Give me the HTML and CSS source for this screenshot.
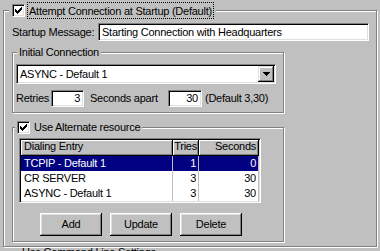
FILE: index.html
```html
<!DOCTYPE html>
<html lang="en">
<head>
    <meta charset="UTF-8">
    <title>Connection Options</title>
    <link rel="stylesheet" href="styles.css">
</head>
<body>
    <div class="group outer">
        <div class="grouptitle main-title">
            <span class="checkbox">
                <svg width="7" height="7" viewBox="0 0 7 7"><path d="M6 0h1v1h-1z M5 1h2v1h-2z M0 2h1v1h-1z M4 2h3v1h-3z M0 3h2v1h-2z M3 3h3v1h-3z M0 4h5v1h-5z M1 5h3v1h-3z M2 6h1v1h-1z" fill="#000"/></svg>
            </span>
            <span class="focus">Attempt Connection at Startup (Default)</span>
        </div>

        <div class="msgrow">
            <span class="msglabel">Startup Message:</span>
            <div class="field msgfield">Starting Connection with Headquarters</div>
        </div>

        <div class="group initial">
            <div class="grouptitle initial-title">Initial Connection</div>
            <div class="combo">
                <span class="combotext">ASYNC - Default 1</span>
                <span class="arrowbtn">
                    <svg width="7" height="4" viewBox="0 0 7 4"><path d="M0 0h7v1h-1v1h-1v1h-1v1h-1v-1h-1v-1h-1v-1h-1z" fill="#000"/></svg>
                </span>
            </div>
            <div class="retryrow">
                <span class="retrylabel">Retries</span>
                <div class="field small">3</div>
                <span class="secslabel">Seconds apart</span>
                <div class="field small wide">30</div>
                <span class="deflabel">(Default 3,30)</span>
            </div>
        </div>

        <div class="group alternate">
            <div class="grouptitle alt-title">
                <span class="checkbox">
                    <svg width="7" height="7" viewBox="0 0 7 7"><path d="M6 0h1v1h-1z M5 1h2v1h-2z M0 2h1v1h-1z M4 2h3v1h-3z M0 3h2v1h-2z M3 3h3v1h-3z M0 4h5v1h-5z M1 5h3v1h-3z M2 6h1v1h-1z" fill="#000"/></svg>
                </span>
                <span class="alttext">Use Alternate resource</span>
            </div>

            <div class="list">
                <div class="lrow head">
                    <span class="cell c1">Dialing Entry</span>
                    <span class="cell c2">Tries</span>
                    <span class="cell c3">Seconds</span>
                </div>
                <div class="lrow selected">
                    <span class="cell c1">TCPIP - Default 1</span>
                    <span class="cell c2">1</span>
                    <span class="cell c3">0</span>
                </div>
                <div class="lrow">
                    <span class="cell c1">CR SERVER</span>
                    <span class="cell c2">3</span>
                    <span class="cell c3">30</span>
                </div>
                <div class="lrow">
                    <span class="cell c1">ASYNC - Default 1</span>
                    <span class="cell c2">3</span>
                    <span class="cell c3">30</span>
                </div>
            </div>

            <div class="buttons">
                <button class="btn">Add</button>
                <button class="btn">Update</button>
                <button class="btn">Delete</button>
            </div>
        </div>
    </div>
    <div class="below">Use Command Line Settings</div>
</body>
</html>
```

FILE: styles.css
```css
* {
    box-sizing: border-box;
}
body {
    margin: 0;
    background-color: #c0c0c0;
    font-family: "Liberation Sans", Arial, sans-serif;
    font-size: 11px;
    letter-spacing: -0.25px;
    line-height: 13px;
    color: #000;
    overflow: hidden;
}

/* etched group boxes */
.group {
    border: 1px solid #808080;
    box-shadow: inset 1px 1px 0 #fff, 1px 1px 0 #fff;
}
.outer {
    margin: 10px 0 0 3px;
    width: 374px;
    height: 237px;
}
.grouptitle {
    width: fit-content;
    background-color: #c0c0c0;
    display: flex;
    align-items: center;
}
.main-title {
    margin: -9px 0 0 5px;
    padding: 0 2px 0 3px;
}
.initial-title {
    margin: -7px 0 0 4px;
    padding: 0 2px;
}
.alt-title {
    margin: -7px 0 0 2px;
    padding: 0 2px;
}

.checkbox {
    width: 13px;
    height: 13px;
    background-color: white;
    border-top: 1px solid #808080;
    border-left: 1px solid #808080;
    border-right: 1px solid #fff;
    border-bottom: 1px solid #fff;
    box-shadow: inset 1px 1px 0 #000, inset -1px -1px 0 #dfdfdf;
    display: flex;
    align-items: center;
    justify-content: center;
}
.checkbox svg {
    display: block;
    shape-rendering: crispEdges;
}
.focus {
    margin-left: 2px;
    border: 1px dotted #000;
    padding: 2px 1px 0;
}
.alttext {
    margin-left: 4px;
}

/* sunken edit fields */
.field {
    background-color: white;
    border-top: 1px solid #808080;
    border-left: 1px solid #808080;
    border-right: 1px solid #fff;
    border-bottom: 1px solid #fff;
    box-shadow: inset 1px 1px 0 #000, inset -1px -1px 0 #dfdfdf;
    display: flex;
    align-items: center;
    white-space: nowrap;
}

.msgrow {
    display: flex;
    align-items: center;
    margin-top: 4px;
    padding-left: 8px;
}
.msglabel {
    width: 86px;
}
.msgfield {
    width: 271px;
    height: 18px;
    padding-left: 3px;
}

.initial {
    margin: 11px 0 0 8px;
    width: 272px;
    height: 61px;
}
.combo {
    margin: 5px 0 0 3px;
    width: 260px;
    height: 20px;
    padding: 1px;
    background-color: white;
    border-top: 1px solid #808080;
    border-left: 1px solid #808080;
    border-right: 1px solid #fff;
    border-bottom: 1px solid #fff;
    box-shadow: inset 1px 1px 0 #000, inset -1px -1px 0 #dfdfdf;
    display: flex;
    align-items: center;
    justify-content: space-between;
}
.combotext {
    padding-left: 2px;
}
.arrowbtn {
    width: 16px;
    height: 16px;
    background-color: #c0c0c0;
    box-shadow: inset -1px -1px 0 #000, inset 1px 1px 0 #dfdfdf, inset -2px -2px 0 #808080, inset 2px 2px 0 #fff;
    display: flex;
    align-items: center;
    justify-content: center;
}
.arrowbtn svg {
    display: block;
    shape-rendering: crispEdges;
}

.retryrow {
    display: flex;
    align-items: center;
    margin-top: 6px;
    padding-left: 3px;
}
.retrylabel {
    width: 35px;
}
.small {
    width: 33px;
    height: 17px;
    justify-content: flex-end;
    padding-right: 3px;
}
.small.wide {
    width: 34px;
}
.secslabel {
    width: 78px;
    margin-left: 6px;
}
.deflabel {
    margin-left: 3px;
}

.alternate {
    margin: 14px 0 0 8px;
    width: 272px;
    height: 115px;
}

/* list view */
.list {
    margin: 4px 0 0 6px;
    width: 242px;
    height: 65px;
    padding: 1px;
    background-color: white;
    border-top: 1px solid #808080;
    border-left: 1px solid #808080;
    border-right: 1px solid #fff;
    border-bottom: 1px solid #fff;
    box-shadow: inset 1px 1px 0 #000, inset -1px -1px 0 #dfdfdf;
}
.lrow {
    display: flex;
    height: 15px;
}
.cell {
    height: 15px;
    line-height: 13px;
    padding-top: 1px;
    border-right: 1px solid #c0c0c0;
    white-space: nowrap;
    overflow: hidden;
}
.c1 {
    width: 152px;
    padding-left: 3px;
}
.c2 {
    width: 26px;
    text-align: right;
    padding-right: 2px;
}
.c3 {
    width: 60px;
    text-align: right;
    padding-right: 2px;
}
.head {
    height: 16px;
}
.head .cell {
    height: 16px;
    padding-top: 0;
    background-color: #c0c0c0;
    border-right: 1px solid #000;
    border-bottom: 1px solid #000;
    box-shadow: inset 1px 1px 0 #fff, inset -1px -1px 0 #808080;
}
.head .c2 {
    padding-right: 1px;
}
.selected {
    background-color: #000080;
    color: white;
}

/* push buttons */
.buttons {
    display: flex;
    gap: 8px;
    margin: 10px 0 0 27px;
}
.btn {
    width: 62px;
    height: 23px;
    border: none;
    padding: 0;
    background-color: #c0c0c0;
    font: inherit;
    letter-spacing: inherit;
    color: #000;
    box-shadow: inset -1px -1px 0 #000, inset 1px 1px 0 #fff, inset -2px -2px 0 #808080, inset 2px 2px 0 #dfdfdf;
}

.below {
    padding-left: 22px;
    line-height: 11px;
}
```
